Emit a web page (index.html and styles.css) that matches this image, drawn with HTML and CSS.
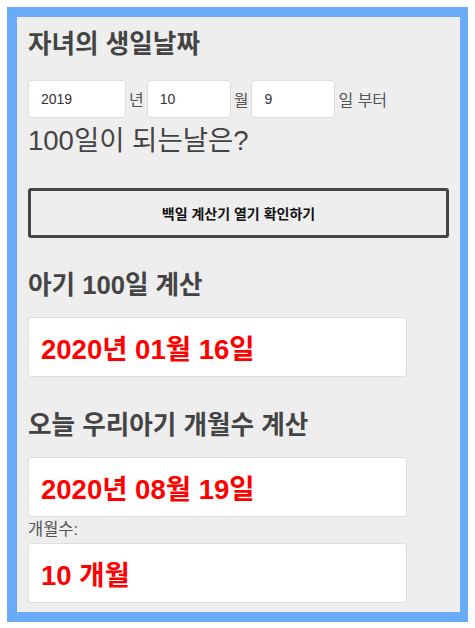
FILE: index.html
```html
<!DOCTYPE html>
<html lang="ko">
<head>
    <meta charset="UTF-8">
    <meta name="viewport" content="width=device-width, initial-scale=1.0">
    <title>아기 100일 계산기</title>
    <link rel="stylesheet" href="styles.css">
</head>
<body>
    <div class="wrap">
        <h1 class="title">자녀의 생일날짜</h1>
        <div class="date-row">
            <input type="text" class="input-field year" value="2019">
            <span class="unit">년</span>
            <input type="text" class="input-field" value="10">
            <span class="unit">월</span>
            <input type="text" class="input-field" value="9">
            <span class="unit">일 부터</span>
        </div>
        <div class="question">100일이 되는날은?</div>
        <button class="button">백일 계산기 열기 확인하기</button>

        <h3 class="header">아기 100일 계산</h3>
        <div class="result">2020년 01월 16일</div>

        <h3 class="header">오늘 우리아기 개월수 계산</h3>
        <div class="result">2020년 08월 19일</div>
        <div class="label">개월수:</div>
        <div class="result">10 개월</div>
    </div>
</body>
</html>
```

FILE: styles.css
```css
body {
    font-family: "Liberation Sans", "Noto Sans CJK KR", sans-serif;
    margin: 7px;
    padding: 0;
    background: white;
    color: #444;
}
.wrap {
    width: 463px;
    box-sizing: border-box;
    background: #eee;
    border: 10px solid #6aabf8;
    padding: 12px 11px 9px;
}
.title {
    font-size: 25.6px;
    line-height: 30px;
    font-weight: bold;
    margin: 0 0 21px;
}
.date-row {
    display: flex;
    align-items: center;
    gap: 3px;
}
.input-field {
    width: 84px;
    height: 38px;
    box-sizing: border-box;
    padding: 0 12px;
    border: 1px solid #ddd;
    border-radius: 3px;
    background: white;
    font-family: "Liberation Sans", sans-serif;
    font-size: 14px;
    color: #333;
}
.input-field.year {
    width: 98px;
}
.unit {
    font-size: 16px;
    color: #555;
}
.question {
    font-size: 27.5px;
    line-height: 34px;
    margin-top: 6px;
}
.button {
    display: block;
    width: 100%;
    height: 50px;
    margin-top: 30px;
    background: #eee;
    border: 3px solid #444;
    border-radius: 3px;
    font-family: "Liberation Sans", "Noto Sans CJK KR", sans-serif;
    font-size: 14px;
    font-weight: bold;
    color: #111;
    cursor: pointer;
}
.header {
    font-size: 25.6px;
    line-height: 30px;
    font-weight: bold;
    margin: 33px 0 17px;
}
.button + .header {
    margin-top: 32px;
}
.result {
    width: 379px;
    height: 60px;
    box-sizing: border-box;
    padding: 0 12px;
    display: flex;
    align-items: center;
    background: white;
    border: 1px solid #ddd;
    border-radius: 3px;
    color: red;
    font-size: 27.5px;
    font-weight: bold;
}
.label {
    font-size: 16.5px;
    line-height: 20px;
    color: #555;
    margin: 2px 0 4px;
}
```
